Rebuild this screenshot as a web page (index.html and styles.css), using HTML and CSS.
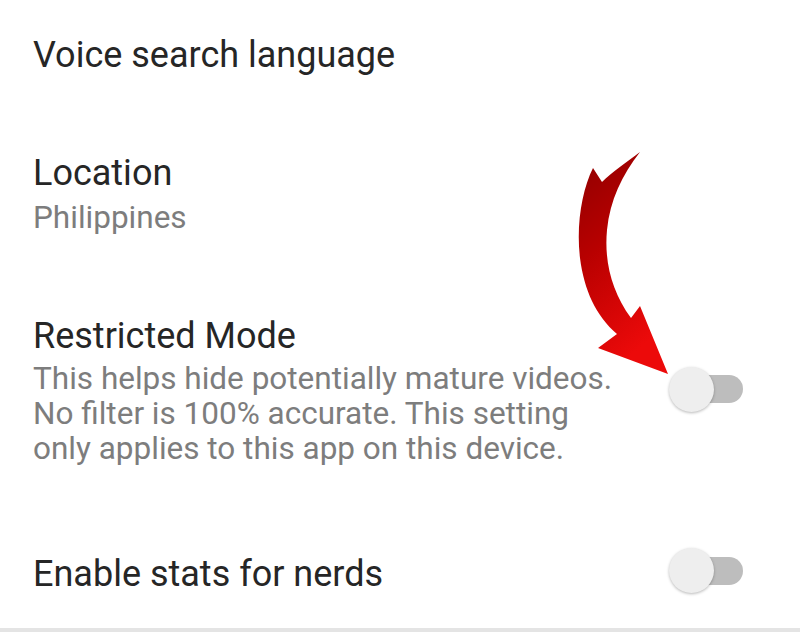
FILE: index.html
```html
<!DOCTYPE html>
<html lang="en">
<head>
<meta charset="utf-8">
<title>Settings</title>
<link rel="stylesheet" href="styles.css">
</head>
<body>
<main class="settings">
  <div class="row row-first">
    <div class="text"><div class="title">Voice search language</div></div>
  </div>
  <div class="row row-location">
    <div class="text">
      <div class="title">Location</div>
      <div class="summary summary-single">Philippines</div>
    </div>
  </div>
  <div class="row">
    <div class="text">
      <div class="title">Restricted Mode</div>
      <div class="summary">This helps hide potentially mature videos.<br>No filter is 100% accurate. This setting<br>only applies to this app on this device.</div>
    </div>
    <div class="switch"><span class="thumb"></span></div>
  </div>
  <div class="row row-last">
    <div class="text"><div class="title">Enable stats for nerds</div></div>
    <div class="switch switch-raised"><span class="thumb"></span></div>
  </div>
</main>
<div class="divider"></div>
<svg class="arrow" width="800" height="632" viewBox="0 0 800 632" aria-hidden="true">
  <defs>
    <linearGradient id="ag" x1="0" y1="0" x2="0.35" y2="1">
      <stop offset="0" stop-color="#8e0000"/>
      <stop offset="0.45" stop-color="#b80000"/>
      <stop offset="1" stop-color="#ec0a0a"/>
    </linearGradient>
  </defs>
  <path fill="url(#ag)" d="M593,168 L602,182 C612,172 627,162 640,152 C622,175 610,200 607,230 C604,262 612,292 631,318 L640,306 L668,374 L598,348 L617,334 C596,316 584,290 580,258 C576,225 582,190 593,168 Z"/>
</svg>
</body>
</html>
```
FILE: styles.css
```css
html, body {
  margin: 0;
  padding: 0;
  background: #ffffff;
}
body {
  width: 800px;
  height: 632px;
  position: relative;
  overflow: hidden;
  font-family: Roboto, "Noto Sans", sans-serif;
}
.settings {
  display: flex;
  flex-direction: column;
  height: 628px;
}
.row {
  display: flex;
  align-items: center;
  justify-content: space-between;
  padding: 38px 57px 38px 33px;
}
.row-first {
  padding-top: 31px;
  padding-bottom: 32px;
}
.row-location {
  padding-bottom: 39px;
}
.row-last {
  padding-top: 46px;
}
.title {
  font-size: 36px;
  line-height: 48px;
  color: #262626;
}
.summary {
  margin-top: 1px;
  font-size: 31.5px;
  line-height: 35px;
  color: #7d7d7d;
}
.summary-single {
  margin-top: 3px;
}
.switch {
  position: relative;
  width: 74px;
  height: 46px;
  flex: none;
  display: flex;
  align-items: center;
}
.switch-raised {
  margin-top: -7px;
}
.switch::before {
  content: "";
  position: absolute;
  left: 1px;
  right: 0;
  top: 9px;
  height: 28px;
  border-radius: 14px;
  background: #bdbdbd;
}
.thumb {
  position: relative;
  width: 45px;
  height: 45px;
  border-radius: 50%;
  background: #eeeeee;
  box-shadow: 0 1px 3px rgba(0, 0, 0, 0.28);
}
.divider {
  height: 4px;
  background: #e4e4e4;
}
.arrow {
  position: absolute;
  left: 0;
  top: 0;
  pointer-events: none;
}
```
